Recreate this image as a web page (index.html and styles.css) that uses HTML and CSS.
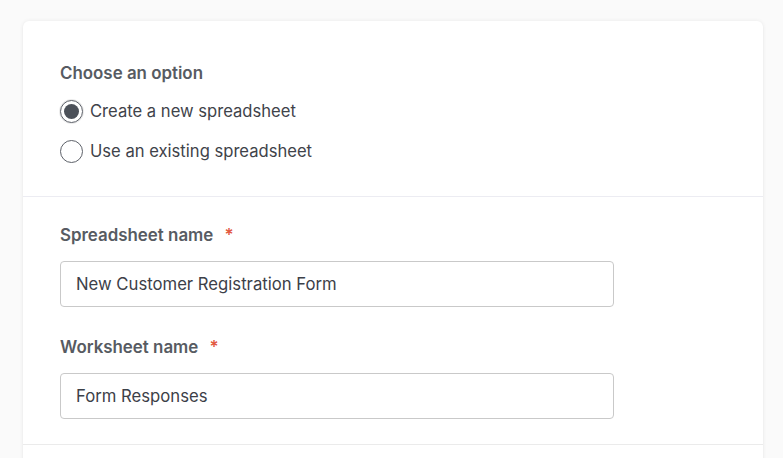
FILE: index.html
```html
<!DOCTYPE html>
<html>
<head>
<meta charset="utf-8">
<link rel="stylesheet" href="styles.css">
</head>
<body>
<div class="card">
  <section class="section section-top">
    <div class="heading">Choose an option</div>
    <div class="radio-group">
      <label class="radio-row">
        <span class="radio checked"></span>
        <span class="radio-label">Create a new spreadsheet</span>
      </label>
      <label class="radio-row">
        <span class="radio"></span>
        <span class="radio-label">Use an existing spreadsheet</span>
      </label>
    </div>
  </section>
  <section class="section section-fields">
    <div class="field">
      <div class="heading">Spreadsheet name <span class="req">*</span></div>
      <div class="input">New Customer Registration Form</div>
    </div>
    <div class="field">
      <div class="heading">Worksheet name <span class="req">*</span></div>
      <div class="input">Form Responses</div>
    </div>
  </section>
  <section class="section section-rest"></section>
</div>
</body>
</html>
```
FILE: styles.css
```css
html, body {
  margin: 0;
  padding: 0;
  background: #fafafa;
  font-family: Inter, "Noto Sans", sans-serif;
  height: 458px;
  overflow: hidden;
}
body {
  padding: 21px 20px 0 23px;
}
.card {
  width: 740px;
  background: #fff;
  border-radius: 6px;
  box-shadow: 0 0 4px rgba(0,0,0,0.07), 0 1px 2px rgba(0,0,0,0.04);
  height: 600px;
}
.section {
  padding: 0 37px;
  border-bottom: 1px solid #ececf2;
}
.section-top {
  padding-top: 40px;
  padding-bottom: 33px;
  display: flex;
  flex-direction: column;
  gap: 14px;
}
.radio-group {
  display: flex;
  flex-direction: column;
  gap: 16px;
}
.section-fields {
  padding-top: 26px;
  padding-bottom: 25px;
  display: flex;
  flex-direction: column;
  gap: 28px;
  border-bottom-color: #ebebeb;
}
.section-rest { border-bottom: none; }
.field {
  display: flex;
  flex-direction: column;
  gap: 14px;
}
.heading {
  font-size: 16.9px;
  line-height: 24px;
  font-weight: 600;
  color: #575b62;
}
.req {
  color: #e2583f;
  margin-left: 7px;
}
.radio-row {
  display: flex;
  align-items: center;
  gap: 7px;
  height: 24px;
}
.radio {
  box-sizing: border-box;
  width: 23px;
  height: 23px;
  border-radius: 50%;
  border: 1px solid #5d6169;
  background: #fff;
  position: relative;
}
.radio.checked::after {
  content: "";
  position: absolute;
  left: 3px;
  top: 3px;
  width: 15px;
  height: 15px;
  border-radius: 50%;
  background: #4c5159;
}
.radio.checked {
  box-shadow: 0 0 0 1px rgba(0,0,0,0.08);
}
.radio-label {
  font-size: 16.6px;
  color: #3f434a;
}
.input {
  box-sizing: border-box;
  width: 554px;
  height: 46px;
  border: 1px solid #c9c9c9;
  border-radius: 4px;
  padding: 0 15px;
  display: flex;
  align-items: center;
  font-size: 16.7px;
  color: #3c4048;
}
```
